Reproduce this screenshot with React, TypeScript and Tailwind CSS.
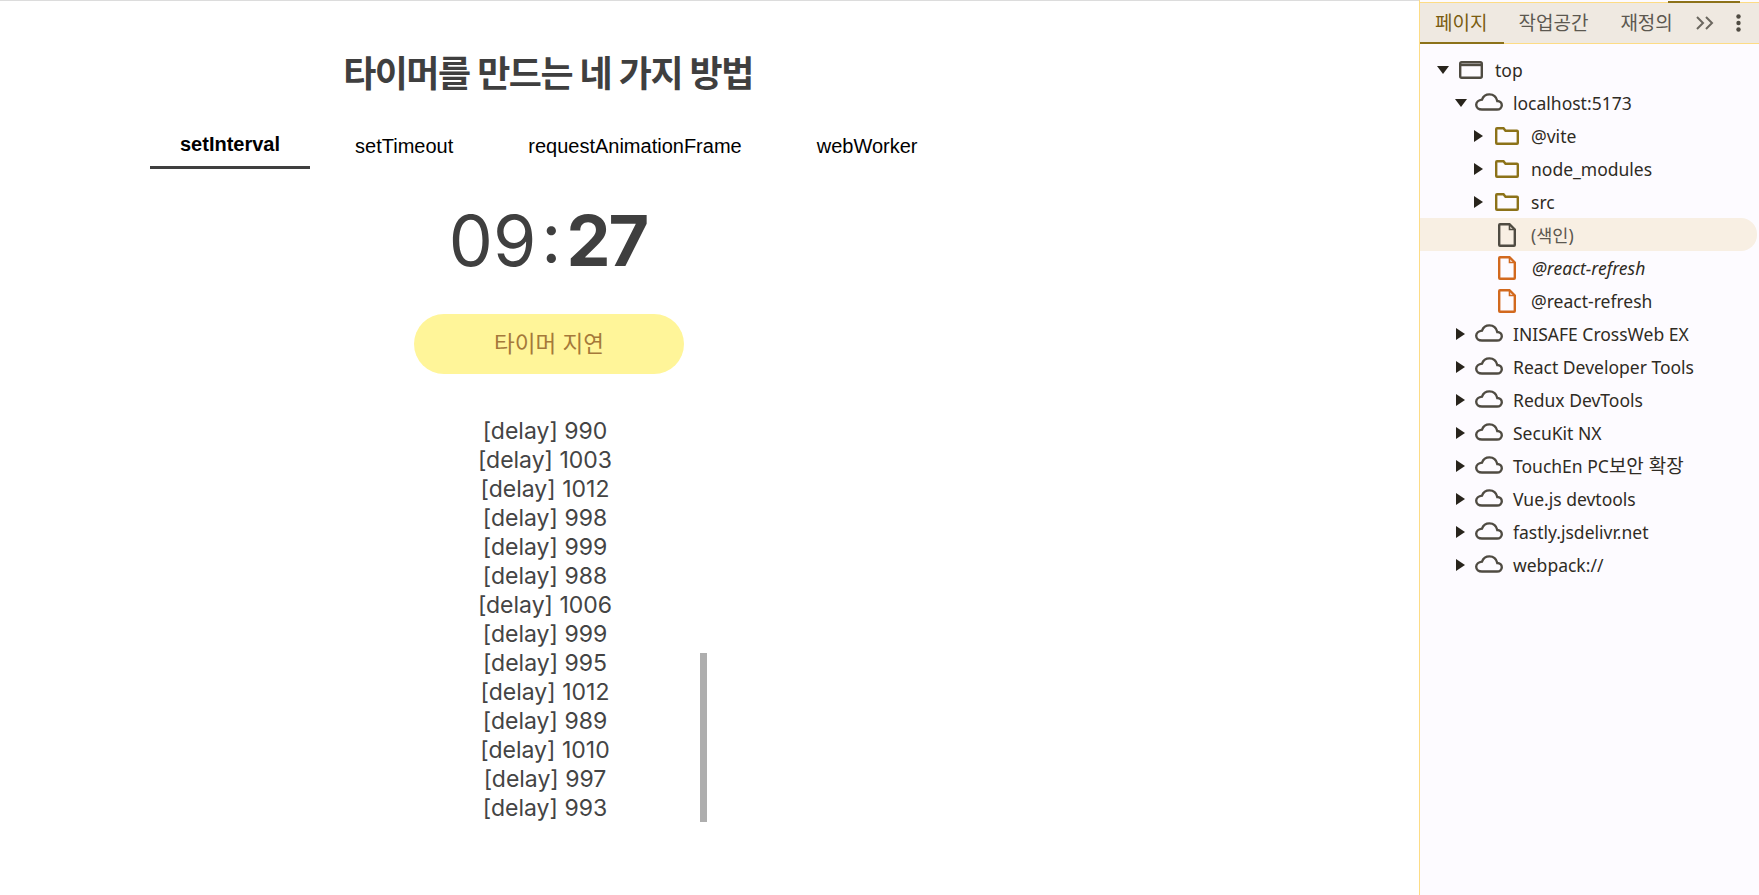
import React from "react";

const delays = [990, 1003, 1012, 998, 999, 988, 1006, 999, 995, 1012, 989, 1010, 997, 993];
const tabs = ["setInterval", "setTimeout", "requestAnimationFrame", "webWorker"];

const sidebarFont = "font-['Noto_Sans','Noto_Sans_CJK_KR',sans-serif]";

const Triangle = ({ open }: { open: boolean }) =>
  open ? (
    <svg width="12" height="8" viewBox="0 0 12 8">
      <path d="M0 0H12L6 8Z" fill="#28241c" />
    </svg>
  ) : (
    <svg width="9" height="12" viewBox="0 0 9 12">
      <path d="M0 0L9 6L0 12Z" fill="#28241c" />
    </svg>
  );

const WindowIcon = () => (
  <svg width="24" height="18" viewBox="0 0 24 18" fill="none" stroke="#4f4b42" strokeWidth="2.4">
    <rect x="1.2" y="1.2" width="21.6" height="15.6" rx="1.5" />
    <path d="M1 4H23" />
  </svg>
);

const CloudIcon = () => (
  <svg className="mb-[2px]" width="28" height="18" viewBox="0 0 28 18" fill="none" stroke="#4f4b42" strokeWidth="2.4">
    <path d="M7 16.5H22C24.8 16.5 26.8 14.6 26.8 12.2C26.8 9.8 24.8 8 22.3 8C21.4 4 18.2 1.4 14.4 1.4C11 1.4 8.2 3.4 7 6.6C3.6 7 1.2 9.2 1.2 11.8C1.2 14.6 3.6 16.5 7 16.5Z" />
  </svg>
);

const FolderIcon = () => (
  <svg width="24" height="18" viewBox="0 0 24 18" fill="none" stroke="#8c7219" strokeWidth="2.4">
    <path d="M1.2 2C1.2 1.5 1.5 1.2 2 1.2H8.5L10.5 3.8H22C22.5 3.8 22.8 4.1 22.8 4.6V16C22.8 16.5 22.5 16.8 22 16.8H2C1.5 16.8 1.2 16.5 1.2 16Z" />
  </svg>
);

const FileIcon = ({ color }: { color: string }) => (
  <svg width="18" height="24" viewBox="0 0 18 24" fill="none" stroke={color} strokeWidth="2.4">
    <path d="M2 1.2H11.5L16.8 6.5V22C16.8 22.5 16.5 22.8 16 22.8H2C1.5 22.8 1.2 22.5 1.2 22V2C1.2 1.5 1.5 1.2 2 1.2Z" />
    <path d="M11.5 2V6.5H16" strokeWidth="1.6" />
  </svg>
);

type RowProps = {
  pad: string;
  arrow?: "open" | "closed";
  icon: React.ReactNode;
  label: React.ReactNode;
  active?: boolean;
  italic?: boolean;
  tight?: boolean;
};

const Row = ({ pad, arrow, icon, label, active, italic, tight }: RowProps) => (
  <div
    className={`flex h-[33px] items-center ${pad} ${
      active ? "rounded-r-[16px] bg-[#f8efe3] text-[#5c5850]" : "text-[#2f2b24]"
    } ${italic ? "italic" : ""}`}
  >
    <div className="flex w-[20px] shrink-0 items-center">
      {arrow && <Triangle open={arrow === "open"} />}
    </div>
    <div className={`flex shrink-0 items-center ${tight ? "w-[37px]" : "w-[38px]"}`}>{icon}</div>
    <span className="whitespace-nowrap pt-[2px]">{label}</span>
  </div>
);

const hosts: React.ReactNode[] = [
  "INISAFE CrossWeb EX",
  "React Developer Tools",
  "Redux DevTools",
  "SecuKit NX",
  <>
    TouchEn PC<span className="text-[19px]">보안 확장</span>
  </>,
  "Vue.js devtools",
  "fastly.jsdelivr.net",
  "webpack://",
];

export default function App() {
  return (
    <div className="flex h-[895px] w-full overflow-hidden bg-white">
      <main className="relative h-full w-[1419px] shrink-0 border-t border-[#dcdcdc]">
        <div className="flex w-[1096px] flex-col items-center">
          <h1 className="mt-[50px] font-['Inter','Noto_Sans_CJK_KR',sans-serif] text-[36px] leading-[46px] font-semibold tracking-[-1.5px] text-[#3f3f3f]">
            타이머를 만드는 네 가지 방법
          </h1>
          <nav className="mt-[22px] flex gap-[15px] self-start pl-[150px] font-['Liberation_Sans',sans-serif] text-[20px] text-black">
            {tabs.map((tab, i) => (
              <div
                key={tab}
                className={`flex h-[50px] items-center px-[30px] ${
                  i === 0 ? "border-b-[3px] border-[#3f3f3f] pt-[3px] font-bold" : "pt-[3px]"
                }`}
              >
                {tab}
              </div>
            ))}
          </nav>
          <div className="mt-[28px] flex h-[88px] items-center font-['Inter',sans-serif] text-[70px] leading-none text-[#3f3f3f]">
            <span>09</span>
            <span className="mx-[5px] pb-[6px]">:</span>
            <span className="font-bold tracking-[-2px]">27</span>
          </div>
          <button className="mt-[29px] ml-[2px] h-[60px] w-[270px] rounded-[30px] bg-[#fff599] font-['Inter','Noto_Sans_CJK_KR',sans-serif] text-[22.5px] text-[#a5793a]">
            타이머 지연
          </button>
          <ul className="mt-[43px] flex w-[270px] flex-col items-center font-['Inter',sans-serif] text-[23px] leading-[29px] text-[#444444]">
            {delays.map((d, i) => (
              <li key={i} className="pr-[6px]">
                [delay] {d}
              </li>
            ))}
          </ul>
        </div>
        <div className="absolute top-[652px] left-[700px] h-[169px] w-[7px] bg-[#aeaeae]" />
      </main>
      <aside className={`h-full flex-1 border-l border-[#fddc85] bg-[#fdfbff] text-[17.5px] ${sidebarFont}`}>
        <div className="relative mt-[2px] flex h-[42px] items-center border-y border-[#fddc85] bg-[#efe9e1] text-[19px] text-[#5c5850]">
          <div className="absolute top-[-2px] left-[248px] h-[2px] w-[72px] bg-[#8c7219]" />
          <div className="absolute bottom-[-1px] left-0 h-[2px] w-[84px] bg-[#8c7219]" />
          <span className="ml-[15px] text-[#7a5c10]">페이지</span>
          <span className="ml-[31px]">작업공간</span>
          <span className="ml-[32px]">재정의</span>
          <svg className="ml-[23px]" width="18" height="14" viewBox="0 0 18 14" fill="none" stroke="#6b675f" strokeWidth="2">
            <path d="M1 1L7 7L1 13M10 1L16 7L10 13" />
          </svg>
          <svg className="ml-[22px]" width="5" height="18" viewBox="0 0 5 18" fill="#4f4b42">
            <circle cx="2.5" cy="2.5" r="2.2" />
            <circle cx="2.5" cy="9" r="2.2" />
            <circle cx="2.5" cy="15.5" r="2.2" />
          </svg>
        </div>
        <div className="mt-[9px]">
          <Row pad="pl-[17px]" arrow="open" icon={<div className="ml-[2px] flex"><WindowIcon /></div>} label="top" />
          <Row pad="pl-[35px]" arrow="open" icon={<CloudIcon />} label="localhost:5173" />
          <Row pad="pl-[54px]" tight arrow="closed" icon={<div className="ml-[1px] flex"><FolderIcon /></div>} label="@vite" />
          <Row pad="pl-[54px]" tight arrow="closed" icon={<div className="ml-[1px] flex"><FolderIcon /></div>} label="node_modules" />
          <Row pad="pl-[54px]" tight arrow="closed" icon={<div className="ml-[1px] flex"><FolderIcon /></div>} label="src" />
          <div className="mr-[2px]">
            <Row pad="pl-[54px]" tight active icon={<div className="ml-[4px] flex"><FileIcon color="#4f4b42" /></div>} label="(색인)" />
          </div>
          <Row pad="pl-[54px]" italic icon={<div className="ml-[4px] flex"><FileIcon color="#d2691e" /></div>} label="@react-refresh" />
          <Row pad="pl-[54px]" tight icon={<div className="ml-[4px] flex"><FileIcon color="#d2691e" /></div>} label="@react-refresh" />
          {hosts.map((name, i) => (
            <Row key={i} pad="pl-[36px]" tight arrow="closed" icon={<div className="-ml-[1px] flex"><CloudIcon /></div>} label={name} />
          ))}
        </div>
      </aside>
    </div>
  );
}
